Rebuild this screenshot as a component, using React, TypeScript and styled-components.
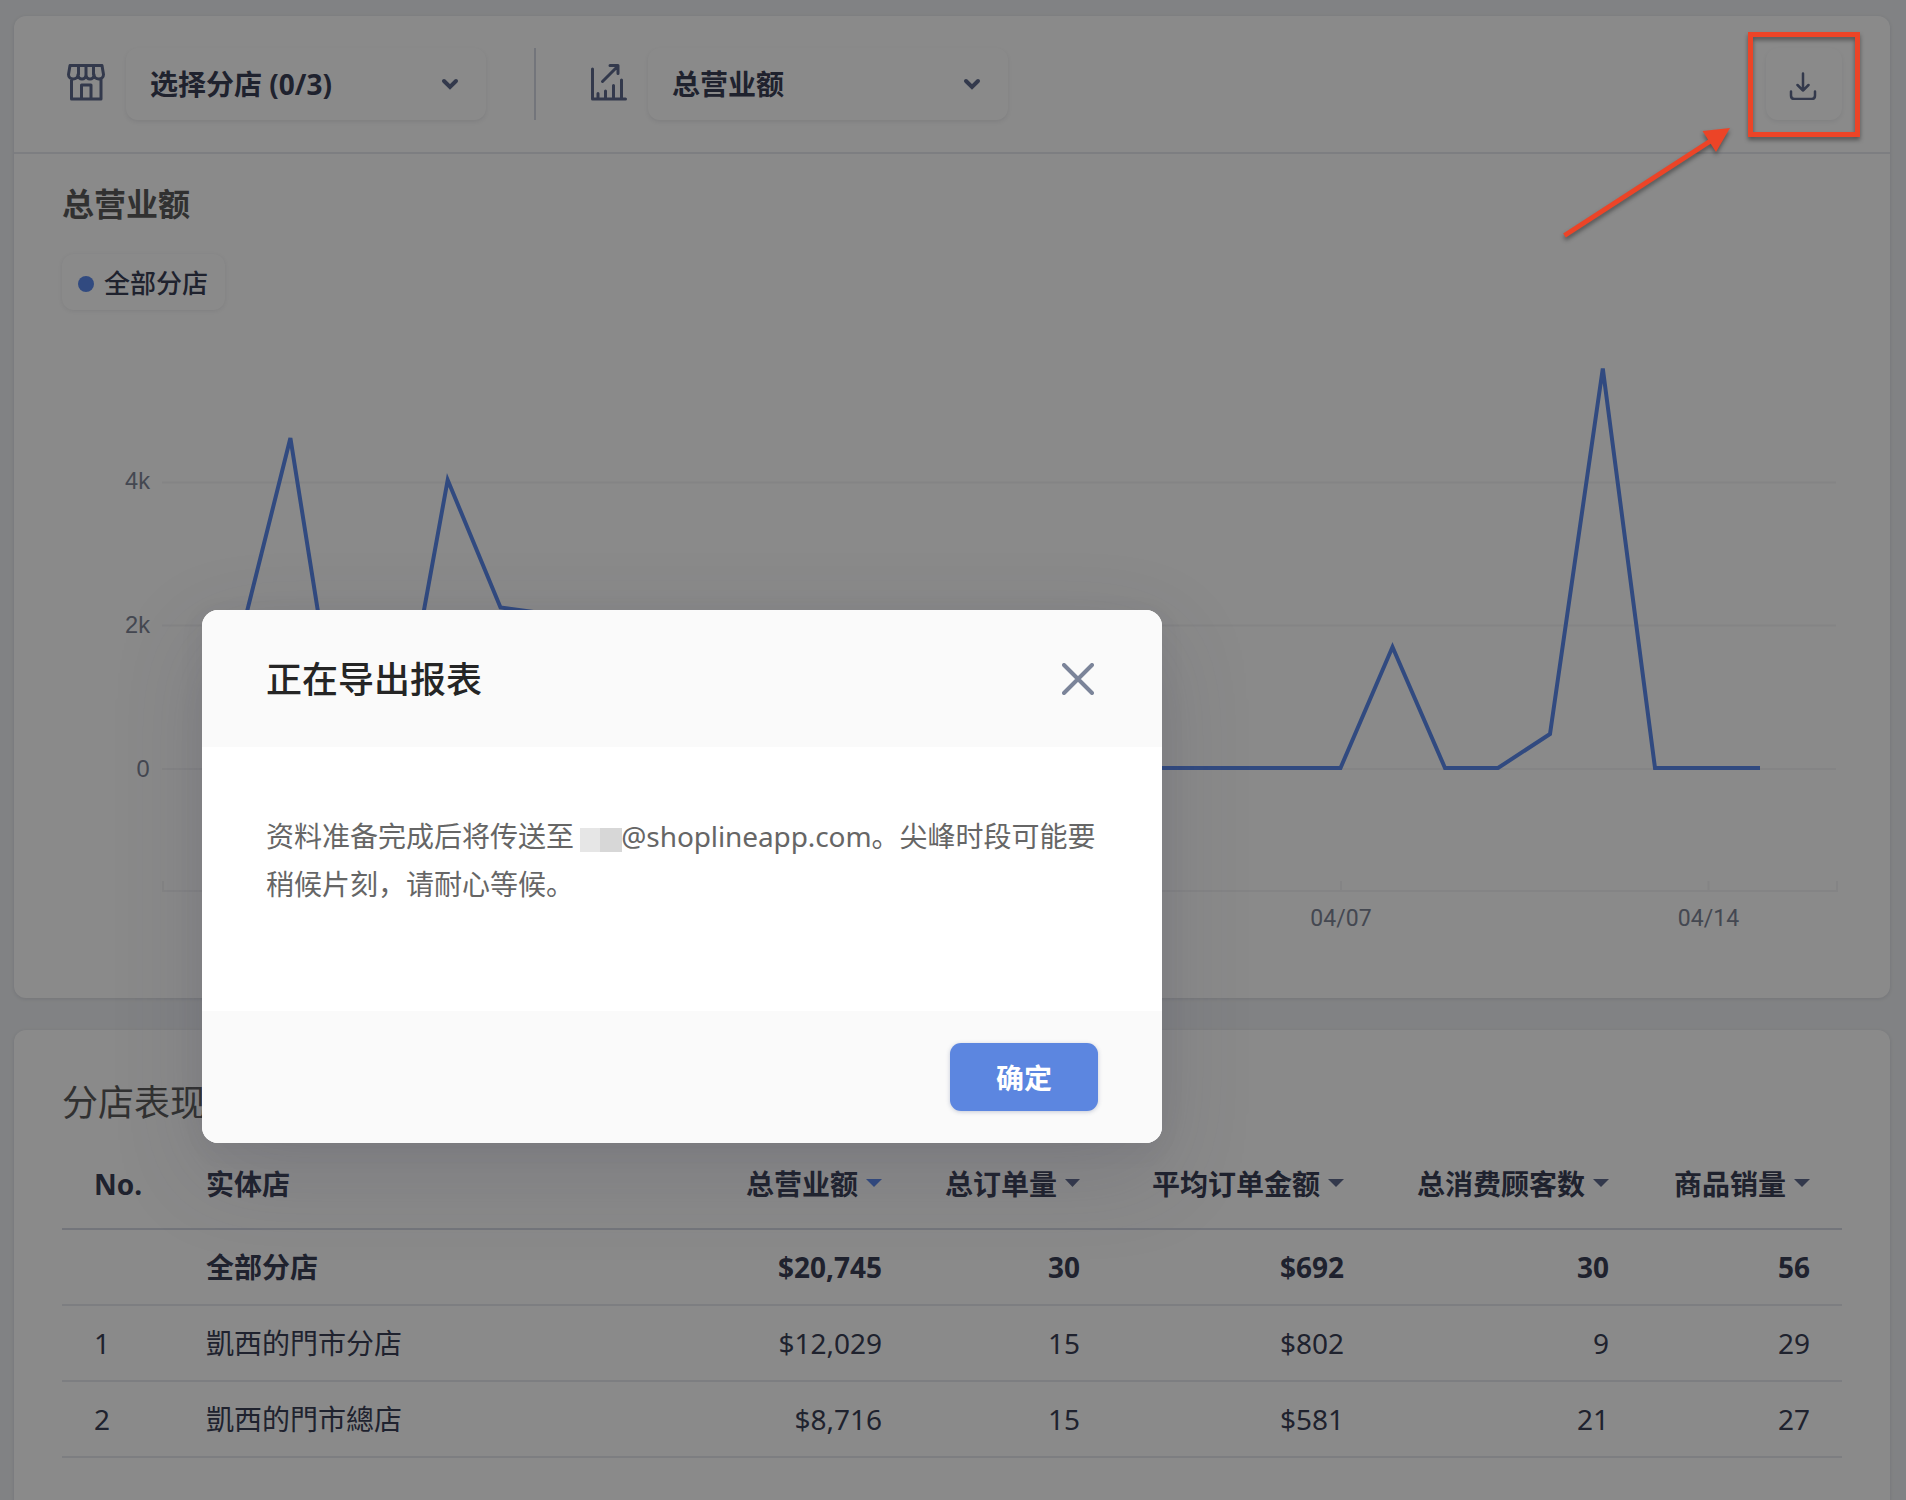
import React from "react";
import styled, { createGlobalStyle } from "styled-components";

const latin = '"Noto Sans", "Noto Sans CJK SC", sans-serif';

const GlobalStyle = createGlobalStyle`
  *, *::before, *::after { box-sizing: border-box; }
  body { margin: 0; background: #eff1f4; overflow: hidden; }
`;

const Page = styled.div`
  position: relative;
  width: 1906px;
  height: 1500px;
  overflow: hidden;
  padding: 16px 16px 0 14px;
  display: flex;
  flex-direction: column;
  gap: 32px;
  background: #eff1f4;
  font-family: ${latin};
  color: #3a4056;
`;

const Card = styled.section<{ $height: number }>`
  flex: none;
  height: ${(p) => p.$height}px;
  display: flex;
  flex-direction: column;
  border-radius: 12px;
  background: #fff;
  box-shadow: 0 1px 4px rgba(30, 35, 60, 0.12);
`;

const Toolbar = styled.header`
  flex: none;
  height: 138px;
  padding: 32px 48px 0 52px;
  display: flex;
  align-items: flex-start;
  border-bottom: 2px solid #e7e9ee;
`;

const ToolIcon = styled.svg`
  flex: none;
  width: 40px;
  height: 40px;
  margin: 14px 20px 0 0;
  fill: none;
  stroke: #5e6a8d;
  stroke-width: 3;
  stroke-linecap: round;
  stroke-linejoin: round;
`;

const Select = styled.button`
  width: 360px;
  height: 72px;
  padding: 0 27px 0 24px;
  display: flex;
  align-items: center;
  justify-content: space-between;
  border: 0;
  border-radius: 12px;
  background: #fff;
  box-shadow: 0 2px 4px rgba(30, 35, 60, 0.09);
  font: 700 28px/40px ${latin};
  color: #3a4056;
`;

const SelectLabel = styled.span`
  padding-top: 0;
`;

const Chevron = styled.svg`
  width: 18px;
  height: 12px;
  fill: none;
  stroke: #5e6a8d;
  stroke-width: 4;
  stroke-linecap: round;
`;

const Divider = styled.div`
  width: 2px;
  height: 72px;
  margin: 0 52px 0 48px;
  background: #d5d9e4;
`;

const IconButton = styled.button`
  width: 76px;
  height: 72px;
  margin-left: auto;
  padding: 4px 2px 0 0;
  display: flex;
  align-items: center;
  justify-content: center;
  border: 0;
  border-radius: 12px;
  background: #fff;
  box-shadow: 0 2px 4px rgba(30, 35, 60, 0.08);
`;

const ChartHead = styled.div`
  padding: 27px 48px 0;
  display: flex;
  flex-direction: column;
  align-items: flex-start;
  gap: 27px;
`;

const ChartTitle = styled.h2`
  margin: 0;
  font: 700 32px/46px ${latin};
  color: #5c5c5c;
`;

const Legend = styled.div`
  width: 163px;
  height: 56px;
  padding: 1px 0 0 16px;
  display: flex;
  align-items: center;
  gap: 10px;
  border-radius: 12px;
  box-shadow: 0 1px 4px rgba(30, 35, 60, 0.09);
  font: 500 26px/36px ${latin};
`;

const Dot = styled.i`
  width: 16px;
  height: 16px;
  margin-top: 2px;
  border-radius: 50%;
  background: #5c8aec;
`;

const Plot = styled.svg`
  display: block;
  width: 1876px;
  height: 640px;
`;

const AxisText = styled.text<{ $date?: boolean }>`
  font-family: ${(p) => (p.$date ? '"Roboto", sans-serif' : '"Liberation Sans", sans-serif')};
  font-size: ${(p) => (p.$date ? 23 : 23.6)}px;
  letter-spacing: ${(p) => (p.$date ? 0.1 : 0)}px;
  fill: #7e8597;
`;

const TableTitle = styled.h2`
  margin: 0;
  padding: 47px 0 0 48px;
  font: 400 36px/52px ${latin};
  color: #5c5c5c;
`;

const Table = styled.div`
  margin: 9px 48px 0;
`;

const Row = styled.div<{ $head?: boolean; $bold?: boolean }>`
  height: ${(p) => (p.$head ? 92 : 76)}px;
  padding-top: ${(p) => (p.$head ? 2 : 0)}px;
  display: grid;
  grid-template-columns: 112px 486px 253px 199px 264px 265px 201px;
  align-items: center;
  border-bottom: 2px solid ${(p) => (p.$head ? "#d5d9e4" : "#e7e9ee")};
  font-size: 28px;
  line-height: 40px;
  font-weight: ${(p) => (p.$head || p.$bold ? 700 : 400)};
`;

const Cell = styled.div<{ $num?: boolean }>`
  padding: 0 32px;
  display: flex;
  align-items: center;
  justify-content: ${(p) => (p.$num ? "flex-end" : "flex-start")};
  gap: 8px;
  white-space: nowrap;

  &:nth-child(3) {
    padding-right: 31px;
  }
`;

const Sort = styled.i<{ $active: boolean }>`
  width: 16px;
  height: 8px;
  margin-top: -2px;
  clip-path: polygon(0 0, 100% 0, 50% 100%);
  background: ${(p) => (p.$active ? "#5c8aec" : "#5e6a8d")};
`;

const Overlay = styled.div`
  position: absolute;
  inset: 0;
  background: rgba(0, 0, 0, 0.46);
`;

const Modal = styled.div`
  position: absolute;
  left: 202px;
  top: 610px;
  width: 960px;
  height: 533px;
  display: flex;
  flex-direction: column;
  overflow: hidden;
  border-radius: 16px;
  background: #fff;
  box-shadow: 0 30px 90px rgba(60, 62, 84, 0.18), 0 6px 24px rgba(60, 62, 84, 0.08);
`;

const ModalHead = styled.div`
  height: 137px;
  padding: 2px 68px 0 64px;
  display: flex;
  align-items: center;
  justify-content: space-between;
  background: #fafafa;
  font: 500 36px/52px ${latin};
  color: #252525;
`;

const CloseIcon = styled.svg`
  width: 32px;
  height: 32px;
  margin-top: -1px;
  stroke: #7b8499;
  stroke-width: 4;
  stroke-linecap: round;
`;

const ModalBody = styled.div`
  height: 264px;
  padding: 65px 64px 0;
  font: 400 28px/48px ${latin};
  color: #666;
  white-space: nowrap;
`;

const Mask = styled.span`
  display: inline-block;
  width: 42px;
  height: 24px;
  margin-left: -1px;
  vertical-align: -5px;
  background: linear-gradient(90deg, #e6e6e6 20px, #d7d7d7 20px);
`;

const Email = styled.span`
  margin-left: -1px;
  letter-spacing: -0.1px;
`;

const ModalFoot = styled.div`
  flex: 1;
  padding: 32px 64px 0;
  display: flex;
  justify-content: flex-end;
  align-items: flex-start;
  background: #fafafa;
`;

const Primary = styled.button`
  width: 148px;
  height: 68px;
  padding: 1px 0 0;
  border: 0;
  border-radius: 11px;
  background: #5c86e0;
  box-shadow: 0 1px 4px rgba(40, 60, 110, 0.25);
  font: 700 28px/40px ${latin};
  color: #fff;
`;

const Annotation = styled.svg`
  position: absolute;
  left: 1550px;
  top: 20px;
  width: 330px;
  height: 230px;
  filter: drop-shadow(0 3px 2px rgba(0, 0, 0, 0.4));
`;

const columns = ["总营业额", "总订单量", "平均订单金额", "总消费顾客数", "商品销量"];
const rows = [
  ["", "全部分店", "$20,745", "30", "$692", "30", "56"],
  ["1", "凱西的門市分店", "$12,029", "15", "$802", "9", "29"],
  ["2", "凱西的門市總店", "$8,716", "15", "$581", "21", "27"],
];

const SelectBox = ({ label }: { label: string }) => (
  <Select>
    <SelectLabel>{label}</SelectLabel>
    <Chevron viewBox="0 0 18 12">
      <path d="M3 3l6 6 6-6" />
    </Chevron>
  </Select>
);

export default function App() {
  return (
    <>
      <GlobalStyle />
      <Page>
        <Card $height={982}>
          <Toolbar>
            <ToolIcon viewBox="0 0 40 40">
              <path d="M4 3.500h32l1.500 9c0 6-9.500 6-9.500 0c0 6-8 6-8 0c0 6-8 6-8 0c0 6-9.500 6-9.500 0zM12.500 3.500v9M20 3.500v9M27.500 3.500v9M5.500 17v20h29.500v-20M15.500 37v-14h9.500v14" />
            </ToolIcon>
            <SelectBox label="选择分店 (0/3)" />
            <Divider />
            <ToolIcon viewBox="0 0 40 40">
              <path d="M4.500 7v30h33M10 37v-5.500M17.500 37v-8M25.500 37v-13.500M33.500 37v-19M14.500 19.500l14.500-14.500M22 3.500h8v8" />
            </ToolIcon>
            <SelectBox label="总营业额" />
            <IconButton>
              <svg width="28" height="28" viewBox="0 0 28 28" fill="none" stroke="#5e6a8d" strokeWidth="2.500" strokeLinecap="round" strokeLinejoin="round">
                <path d="M14 1.500v17M8.500 13l5.500 5.500 5.500-5.500M2 19.500v4q0 3.500 3.500 3.500h17q3.500 0 3.500-3.500v-4" />
              </svg>
            </IconButton>
          </Toolbar>
          <ChartHead>
            <ChartTitle>总营业额</ChartTitle>
            <Legend>
              <Dot />
              全部分店
            </Legend>
          </ChartHead>
          <Plot viewBox="14 310 1876 640">
            <path d="M162 482.500H1836M162 625.500H1836M162 769H1836M163 881v10H1837v-10M1341 881v10M1708.500 881v10" fill="none" stroke="#f4f4f6" strokeWidth="2" />
            <AxisText x="150" y="489" textAnchor="end">4k</AxisText>
            <AxisText x="150" y="633" textAnchor="end">2k</AxisText>
            <AxisText x="149.500" y="776.500" textAnchor="end">0</AxisText>
            <AxisText $date x="1341" y="925.500" textAnchor="middle">04/07</AxisText>
            <AxisText $date x="1708.500" y="925.500" textAnchor="middle">04/14</AxisText>
            <polyline
              points="237.900,648 290.400,438 342.800,768 395.200,768 447.700,480 500.500,607.500 552.600,614.500 605,768 1340.500,768 1392.500,647 1445,768 1498,768 1550,734 1602.800,368.500 1655,768 1760,768"
              fill="none"
              stroke="#5c8aec"
              strokeWidth="4"
              strokeMiterlimit="4"
            />
          </Plot>
        </Card>
        <Card $height={500}>
          <TableTitle>分店表现</TableTitle>
          <Table>
            <Row $head>
              <Cell>No.</Cell>
              <Cell>实体店</Cell>
              {columns.map((name, i) => (
                <Cell key={name} $num>
                  {name}
                  <Sort $active={i === 0} />
                </Cell>
              ))}
            </Row>
            {rows.map((row, r) => (
              <Row key={r} $bold={r === 0}>
                {row.map((value, c) => (
                  <Cell key={c} $num={c > 1}>{value}</Cell>
                ))}
              </Row>
            ))}
          </Table>
        </Card>
        <Overlay />
        <Modal>
          <ModalHead>
            正在导出报表
            <CloseIcon viewBox="0 0 32 32">
              <path d="M2 2l28 28M30 2L2 30" />
            </CloseIcon>
          </ModalHead>
          <ModalBody>
            资料准备完成后将传送至 <Mask />
            <Email>@shoplineapp.com</Email>。尖峰时段可能要
            <br />
            稍候片刻，请耐心等候。
          </ModalBody>
          <ModalFoot>
            <Primary>确定</Primary>
          </ModalFoot>
        </Modal>
        <Annotation viewBox="1550 20 330 230">
          <rect x="1750.500" y="34.500" width="107" height="100" fill="none" stroke="#ec4427" strokeWidth="5" />
          <path d="M1564.500 235.500L1712 140" stroke="#ec4427" strokeWidth="5" />
          <path d="M1730 128l-27.500 3 13.500 21z" fill="#ec4427" />
        </Annotation>
      </Page>
    </>
  );
}
